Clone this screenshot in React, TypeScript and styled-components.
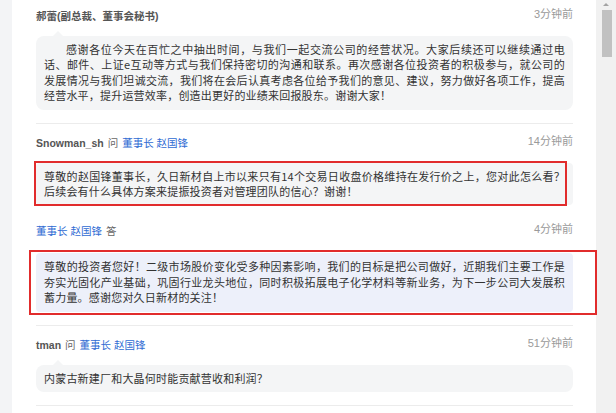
import styled, { createGlobalStyle } from "styled-components";

const GlobalStyle = createGlobalStyle`
  html, body {
    margin: 0;
    padding: 0;
    background: #ffffff;
  }
  body {
    font-family: "Liberation Sans", "Noto Sans CJK SC", sans-serif;
  }
`;

type Box = { top: number; right: number; bottom: number; left: number };

type Item = {
  user: string;
  target?: string;
  kind?: "ask" | "answer" | "plain";
  time: string;
  text: string;
  indent?: boolean;
  marked?: Box;
  tone?: "grey" | "blue";
};

const items: Item[][] = [
  [
    {
      user: "郝蕾(副总裁、董事会秘书)",
      kind: "plain",
      time: "3分钟前",
      indent: true,
      text:
        "感谢各位今天在百忙之中抽出时间，与我们一起交流公司的经营状况。大家后续还可以继续通过电话、邮件、上证e互动等方式与我们保持密切的沟通和联系。再次感谢各位投资者的积极参与，就公司的发展情况与我们坦诚交流，我们将在会后认真考虑各位给予我们的意见、建议，努力做好各项工作，提高经营水平，提升运营效率，创造出更好的业绩来回报股东。谢谢大家！"
    }
  ],
  [
    {
      user: "Snowman_sh",
      target: "董事长 赵国锋",
      kind: "ask",
      time: "14分钟前",
      marked: { top: -2, right: 6, bottom: -1, left: -2 },
      text:
        "尊敬的赵国锋董事长，久日新材自上市以来只有14个交易日收盘价格维持在发行价之上，您对此怎么看？后续会有什么具体方案来提振投资者对管理团队的信心？谢谢！"
    },
    {
      user: "董事长 赵国锋",
      kind: "answer",
      time: "4分钟前",
      marked: { top: -3, right: -24, bottom: -3, left: -7 },
      tone: "blue",
      text:
        "尊敬的投资者您好！二级市场股价变化受多种因素影响，我们的目标是把公司做好，近期我们主要工作是夯实光固化产业基础，巩固行业龙头地位，同时积极拓展电子化学材料等新业务，为下一步公司大发展积蓄力量。感谢您对久日新材的关注！"
    }
  ],
  [
    {
      user: "tman",
      target: "董事长 赵国锋",
      kind: "ask",
      time: "51分钟前",
      text: "内蒙古新建厂和大晶何时能贡献营收和利润？"
    }
  ]
];

export default function App() {
  return (
    <>
      <GlobalStyle />
      <Frame>
        <Gutter />
        <Feed>
          {items.map((group, gi) => (
            <Entry key={gi} $first={gi === 0}>
              {group.map((it, i) => (
                <Post key={i} $gap={it.kind === "answer" ? 16 : 14}>
                  <Head>
                    <Who>
                      {it.kind === "answer" ? (
                        <>
                          <Link>{it.user}</Link>
                          <Verb>答</Verb>
                        </>
                      ) : (
                        <>
                          <Name>{it.user}</Name>
                          {it.target && (
                            <>
                              <Verb>问</Verb>
                              <Link>{it.target}</Link>
                            </>
                          )}
                        </>
                      )}
                    </Who>
                    <Time>{it.time}</Time>
                  </Head>
                  <Bubble $tone={it.tone ?? "grey"} $pointer={!it.marked}>
                    <Text $indent={!!it.indent}>{it.text}</Text>
                    {it.marked && (
                      <Mark
                        style={{
                          top: it.marked.top,
                          right: it.marked.right,
                          bottom: it.marked.bottom,
                          left: it.marked.left
                        }}
                      />
                    )}
                  </Bubble>
                </Post>
              ))}
            </Entry>
          ))}
          <Entry $first={false}>
            <Head>
              <span />
              <Time>1小时前</Time>
            </Head>
          </Entry>
        </Feed>
        <Scrollbar>
          <Arrow />
          <Thumb />
        </Scrollbar>
      </Frame>
    </>
  );
}

const Frame = styled.div`
  display: flex;
  width: 616px;
  height: 413px;
  overflow: hidden;
  background: #ffffff;
`;

const Gutter = styled.div`
  width: 12px;
  flex: none;
  background: #f3f4f6;
`;

const Feed = styled.div`
  flex: none;
  width: 537px;
  margin: 0 23px 0 24px;
  display: flex;
  flex-direction: column;
`;

const Entry = styled.div<{ $first: boolean }>`
  display: flex;
  flex-direction: column;
  gap: 16px;
  padding: ${(p) => (p.$first ? "6px" : "9px")} 0 13px;
  border-top: ${(p) => (p.$first ? "none" : "1px solid #ececec")};
`;

const Post = styled.div<{ $gap: number }>`
  display: flex;
  flex-direction: column;
  gap: ${(p) => p.$gap}px;
`;

const Head = styled.div`
  display: flex;
  justify-content: space-between;
  align-items: flex-start;
  height: 16px;
`;

const Who = styled.div`
  display: flex;
  align-items: center;
  gap: 4px;
  font-size: 10.5px;
  line-height: 16px;
  margin-top: 2px;
`;

const Name = styled.span`
  font-weight: bold;
  color: #555555;
`;

const Verb = styled.span`
  color: #666666;
`;

const Link = styled.span`
  color: #2f6bd3;
`;

const Time = styled.span`
  font-size: 11px;
  line-height: 16px;
  color: #9a9a9a;
`;

const Mark = styled.div`
  position: absolute;
  border: 2px solid #e12c2c;
  pointer-events: none;
`;

const Bubble = styled.div<{ $tone: "grey" | "blue"; $pointer: boolean }>`
  position: relative;
  background: ${(p) => (p.$tone === "blue" ? "#edf0fa" : "#f4f5f6")};
  border-radius: ${(p) => (p.$pointer ? "8px" : "4px")};
  padding: 6px 8px;
  &::before {
    content: "";
    display: ${(p) => (p.$pointer ? "block" : "none")};
    position: absolute;
    top: -5px;
    left: 17px;
    border-left: 5px solid transparent;
    border-right: 5px solid transparent;
    border-bottom: 5px solid ${(p) => (p.$tone === "blue" ? "#edf0fa" : "#f4f5f6")};
  }
`;

const Text = styled.p<{ $indent: boolean }>`
  margin: 0;
  font-family: "Noto Sans CJK SC", "Liberation Sans", sans-serif;
  font-size: 11px;
  line-height: 15.4px;
  letter-spacing: 0.2px;
  color: #333333;
  text-indent: ${(p) => (p.$indent ? "2em" : "0")};
  text-align: justify;
`;

const Scrollbar = styled.div`
  flex: none;
  width: 20px;
  background: #f1f1f1;
  display: flex;
  flex-direction: column;
  align-items: center;
  padding-top: 3px;
  gap: 4px;
`;

const Arrow = styled.div`
  width: 0;
  height: 0;
  border-left: 3px solid transparent;
  border-right: 3px solid transparent;
  border-bottom: 3px solid #a3a3a3;
`;

const Thumb = styled.div`
  width: 10px;
  height: 47px;
  margin-left: 2px;
  background: #c1c1c1;
`;
